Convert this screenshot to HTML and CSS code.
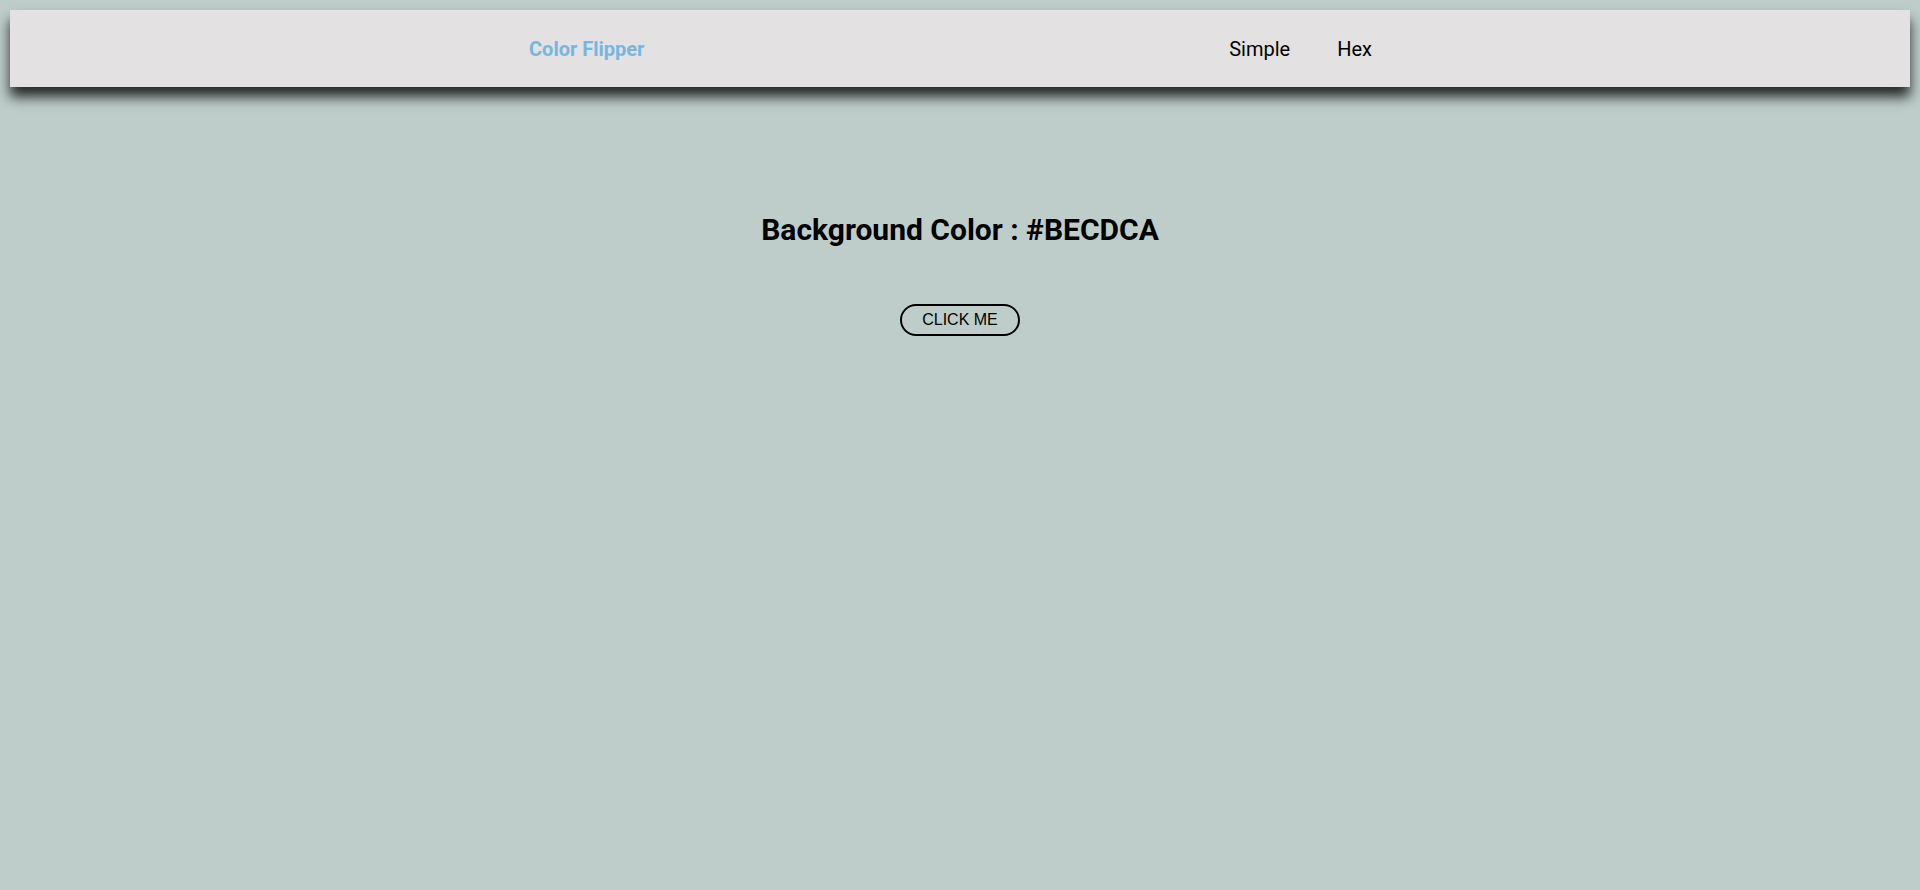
FILE: index.html
```html
<!DOCTYPE html>
<html lang="en">
<head>
<meta charset="utf-8">
<title>Color Flipper</title>
<link rel="stylesheet" href="styles.css">
</head>
<body>
<nav class="navbar">
  <span class="logo">Color Flipper</span>
  <ul class="nav-links">
    <li><a href="#">Simple</a></li>
    <li><a href="#">Hex</a></li>
  </ul>
</nav>
<main class="container">
  <h2 class="title">Background Color : <span class="value">#BECDCA</span></h2>
  <button class="btn">CLICK ME</button>
</main>
</body>
</html>
```
FILE: styles.css
```css
html, body {
  margin: 0;
  padding: 0;
}
body {
  background: #becdca;
  font-family: Roboto, "Noto Sans", sans-serif;
  min-height: 890px;
}
.navbar {
  margin: 10px 10px 0;
  height: 77px;
  background: #e3e1e1;
  box-shadow: 0 10px 12px rgba(0, 0, 0, 0.8);
  display: flex;
  align-items: center;
  justify-content: space-between;
  padding: 1px 538px 0 519px;
  box-sizing: border-box;
}
.logo {
  color: #77b7df;
  font-weight: 700;
  font-size: 20px;
}
.nav-links {
  list-style: none;
  margin: 0;
  padding: 0;
  display: flex;
  gap: 47px;
}
.nav-links a {
  color: #000;
  text-decoration: none;
  font-size: 20px;
}
.container {
  display: flex;
  flex-direction: column;
  align-items: center;
  padding-top: 124px;
}
.title {
  margin: 0;
  font-size: 30px;
  font-weight: 700;
  color: #000;
  line-height: 37px;
}
.btn {
  margin-top: 56px;
  font-family: "Liberation Sans", Arial, sans-serif;
  font-size: 16px;
  line-height: 18px;
  padding: 5px 20px;
  background: transparent;
  border: 2px solid #000;
  border-radius: 16px;
  color: #000;
}
```
